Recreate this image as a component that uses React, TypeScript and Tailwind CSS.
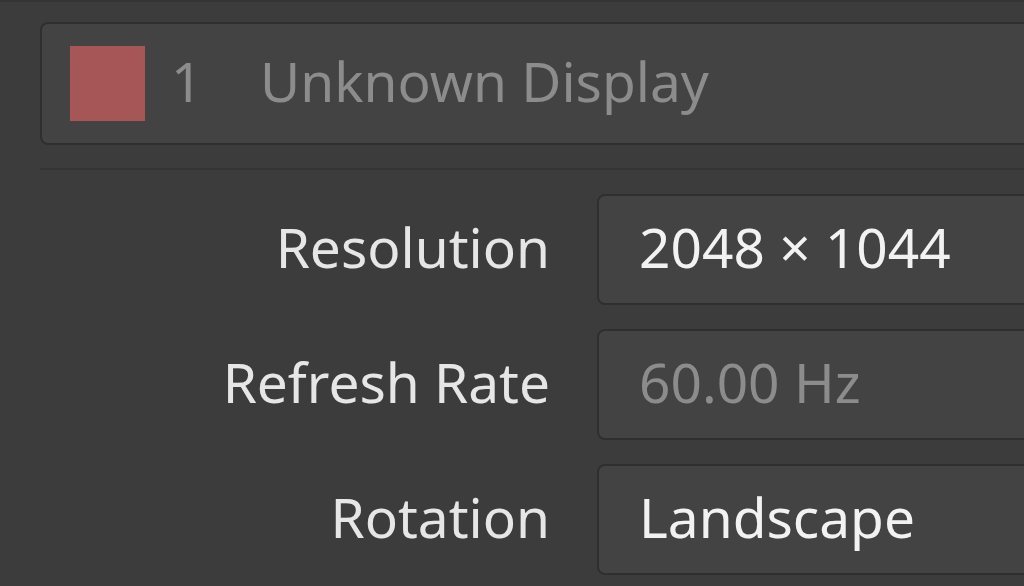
import React from 'react';

const ROWS = [
    { label: 'Resolution', value: '2048 × 1044', disabled: false },
    { label: 'Refresh Rate', value: '60.00 Hz', disabled: true },
    { label: 'Rotation', value: 'Landscape', disabled: false },
];

const App: React.FC = () => {
    return (
        <div
            className="w-[1024px] h-[586px] overflow-hidden bg-[#3c3c3c] border-t-2 border-[#353535]"
            style={{ fontFamily: '"Noto Sans", "DejaVu Sans", sans-serif' }}
        >
            {/* Display header card */}
            <div className="ml-[40px] mr-[-20px] mt-[20px] h-[123px] flex items-center rounded-[8px] border-2 border-[#2f2f2f] bg-[#434343]">
                <div className="ml-[28px] w-[75px] h-[75px] bg-[#a65656]" />
                <span className="ml-[26px] w-[89px] pb-[7px] text-[55px] leading-none text-[#8c8c8c]">1</span>
                <span className="pb-[7px] text-[55px] leading-none text-[#8c8c8c]">Unknown Display</span>
            </div>

            <div className="ml-[40px] mt-[23px] h-[2px] bg-[#353535]" />

            {/* Settings rows */}
            <div className="mt-[24px] flex flex-col gap-[24px]">
                {ROWS.map((row) => (
                    <div key={row.label} className="flex items-center">
                        <div className="w-[550px] pb-[7px] text-right text-[55px] leading-none text-[#e6e6e6]">
                            {row.label}
                        </div>
                        <div className="ml-[47px] mr-[-20px] flex-1 h-[111px] flex items-center rounded-[8px] border-2 border-[#2f2f2f] bg-[#434343] pl-[40px] pb-[7px]">
                            <span className={`text-[55px] leading-none ${row.disabled ? 'text-[#8c8c8c]' : 'text-[#f2f2f2]'}`}>
                                {row.value}
                            </span>
                        </div>
                    </div>
                ))}
            </div>
        </div>
    );
};

export default App;
